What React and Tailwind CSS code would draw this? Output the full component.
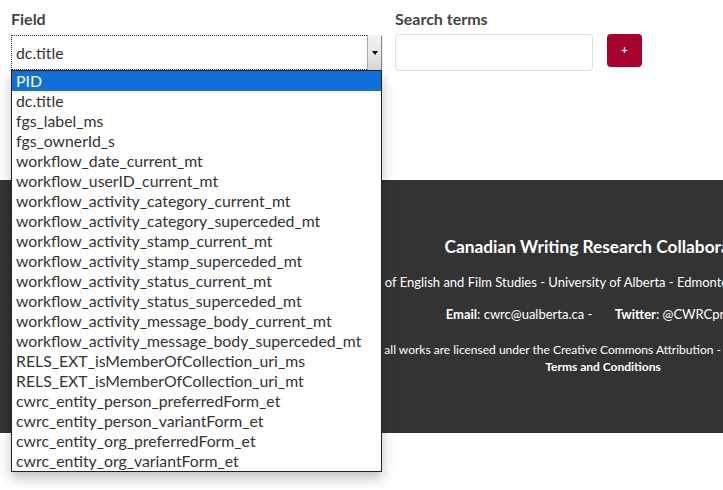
import React from "react";

const fields = [
  "PID",
  "dc.title",
  "fgs_label_ms",
  "fgs_ownerId_s",
  "workflow_date_current_mt",
  "workflow_userID_current_mt",
  "workflow_activity_category_current_mt",
  "workflow_activity_category_superceded_mt",
  "workflow_activity_stamp_current_mt",
  "workflow_activity_stamp_superceded_mt",
  "workflow_activity_status_current_mt",
  "workflow_activity_status_superceded_mt",
  "workflow_activity_message_body_current_mt",
  "workflow_activity_message_body_superceded_mt",
  "RELS_EXT_isMemberOfCollection_uri_ms",
  "RELS_EXT_isMemberOfCollection_uri_mt",
  "cwrc_entity_person_preferredForm_et",
  "cwrc_entity_person_variantForm_et",
  "cwrc_entity_org_preferredForm_et",
  "cwrc_entity_org_variantForm_et",
];

export default function App() {
  return (
    <div className="relative w-[723px] h-[490px] overflow-hidden bg-white font-['Lato','Liberation_Sans',sans-serif]">
      {/* FORMULARIO */}
      <div className="h-[180px] flex gap-[14px] pl-[11px] pt-[9px]">
        <div className="flex flex-col w-[370px]">
          <label className="text-[16px] font-bold text-[#444] leading-[20px]">Field</label>
          <div className="relative mt-[6px] h-[35px] w-[370px] border border-dotted border-[#333] flex items-center">
            <span className="pl-[4px] text-[15.8px] text-[#333]">dc.title</span>
            <div className="absolute right-[-1px] top-[-1px] bottom-[-1px] w-[14px] bg-gradient-to-b from-[#f4f4f4] to-[#d8d8d8] border-l border-[#aaa] shadow-[1px_1px_1px_#888] flex items-center justify-center">
              <div className="w-0 h-0 border-l-[3px] border-r-[3px] border-t-[4px] border-l-transparent border-r-transparent border-t-black" />
            </div>
          </div>
        </div>
        <div className="flex flex-col">
          <label className="text-[16px] font-bold text-[#444] leading-[20px]">Search terms</label>
          <div className="flex gap-[14px] mt-[5px]">
            <input className="w-[198px] h-[37px] border border-[#ddd] rounded-[4px] outline-none" />
            <button className="w-[35px] h-[33px] bg-[#a8002f] rounded-[4px] text-white text-[11px] font-bold flex items-center justify-center">
              +
            </button>
          </div>
        </div>
      </div>

      {/* FOOTER */}
      <footer className="h-[253px] bg-[#333] w-[1206px] text-white text-center whitespace-nowrap pt-[56px]">
        <div className="text-[17.3px] font-bold leading-[22px]">Canadian Writing Research Collaboratory</div>
        <div className="text-[13px] leading-[18px] mt-[15px] pl-[30px]">
          Dept. of English and Film Studies - University of Alberta - Edmonton, Alberta, Canada T6G 2E5
        </div>
        <div className="text-[13px] leading-[18px] mt-[14px] pr-[8px]">
          <b>Email</b>: cwrc@ualberta.ca - <span className="inline-block w-[19px]" />
          <b>Twitter</b>: @CWRCproject
        </div>
        <div className="text-[12px] leading-[17px] mt-[18px] pr-[44px]">
          Except where otherwise noted, all works are licensed under the Creative Commons Attribution - NonCommercial 4.0 International License.
        </div>
        <div className="text-[12px] leading-[17px] font-bold">Terms and Conditions</div>
      </footer>

      {/* LISTA DESPLEGABLE */}
      <div className="absolute left-[11px] top-[70px] w-[371px] border border-[#222] bg-white shadow-[0_6px_12px_rgba(0,0,0,0.25)]">
        {fields.map((f, i) => (
          <div
            key={f}
            className={
              i === 0
                ? "h-[20px] leading-[20px] pl-[4px] text-[15.8px] bg-[#1170d8] text-white"
                : "h-[20px] leading-[20px] pl-[4px] text-[15.8px] text-[#333]"
            }
          >
            {f}
          </div>
        ))}
      </div>
    </div>
  );
}
